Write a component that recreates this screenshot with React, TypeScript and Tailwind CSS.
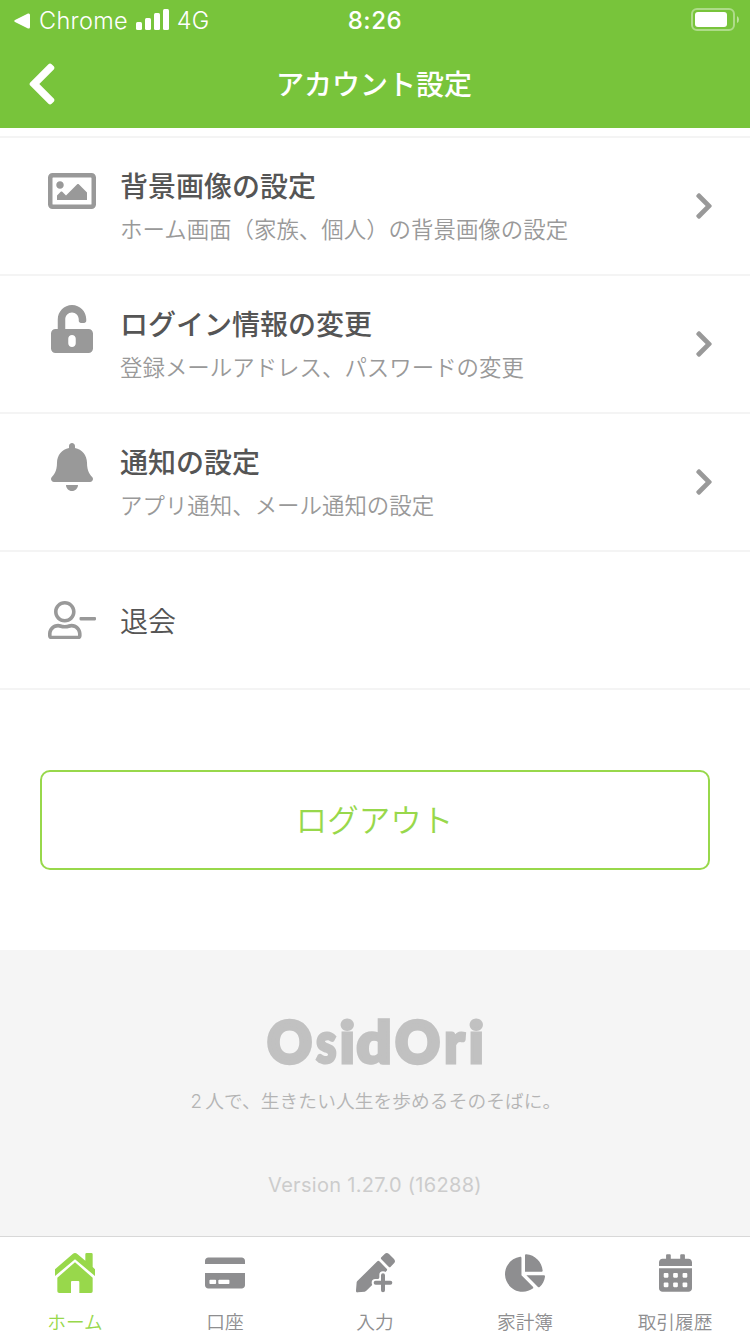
import { ReactNode } from 'react';
import {
  FaBell,
  FaCalendarAlt,
  FaChartPie,
  FaChevronLeft,
  FaChevronRight,
  FaCreditCard,
  FaRegImage,
  FaUnlockAlt,
} from 'react-icons/fa';

const UserMinusIcon = () => (
  <svg viewBox="0 0 640 512" className="w-12 h-[38.4px]" fill="currentColor">
    <path d="M313.6 304c-28.7 0-42.5 16-89.6 16s-60.8-16-89.6-16C60.2 304 0 364.2 0 438.4V464c0 26.5 21.5 48 48 48h352c26.5 0 48-21.5 48-48v-25.6c0-74.2-60.2-134.4-134.4-134.4zM400 464H48v-25.6c0-47.6 38.8-86.4 86.4-86.4 14.6 0 38.3 16 89.6 16 51.7 0 74.9-16 89.6-16 47.6 0 86.4 38.8 86.4 86.4V464zM224 288c79.5 0 144-64.5 144-144S303.5 0 224 0 80 64.5 80 144s64.5 144 144 144zm0-240c52.9 0 96 43.1 96 96s-43.1 96-96 96-96-43.1-96-96 43.1-96 96-96z" />
    <rect x="420" y="213" width="220" height="46" rx="14" />
  </svg>
);

const HomeIcon = () => (
  <svg viewBox="0 0 120 120" className="w-10 h-10" fill="currentColor">
    <path d="M0 49L53 3Q60-3 67 3L91 23V4Q91 0 95 0H109Q113 0 113 4V42L120 49V69L60 19L0 69Z" />
    <path d="M60 28L113 74V115Q113 120 108 120H73V87Q73 84 70 84H51Q48 84 48 87V120H13Q7 120 7 115V74Z" />
  </svg>
);

const PencilPlusIcon = () => (
  <svg viewBox="0 0 120 120" className="w-10 h-10" fill="currentColor">
    <path d="M79 13L89 3Q95-3 102 3L117 18Q123 25 117 31L107 41Q104 44 101 41L79 19Q76 16 79 13Z" />
    <path d="M67 25Q70 22 73 25L95 47Q98 50 95 53L34 113Q32 115 29 116L8 118Q2 119 3 112L5 88Q5 86 7 84Z" />
    <path d="M84 66V113M61 89H107" stroke="white" strokeWidth="22" strokeLinecap="round" />
    <path d="M84 67V112M62 89H106" stroke="currentColor" strokeWidth="12" strokeLinecap="round" />
  </svg>
);

const logoLetters = [
  { char: 'O', x: 12.5, scale: 0.94, stroke: 4.5 },
  { char: 's', x: 61, scale: 0.8, stroke: 3 },
  { char: 'i', x: 84.5, scale: 1.03, stroke: 3 },
  { char: 'd', x: 101.5, scale: 1.06, stroke: 3.5 },
  { char: 'O', x: 140.5, scale: 0.94, stroke: 4.5 },
  { char: 'r', x: 189, scale: 0.95, stroke: 3 },
  { char: 'i', x: 213.5, scale: 1.03, stroke: 3 },
];

const Logo = () => (
  <svg viewBox="0 0 240 84" className="w-60 h-[84px]" fill="#c1c1c1" stroke="#c1c1c1">
    {logoLetters.map((letter, index) => (
      <text
        key={index}
        transform={`translate(${letter.x} 63) scale(${letter.scale} 1)`}
        fontFamily="Lato"
        fontWeight="900"
        fontSize="58"
        strokeWidth={letter.stroke}
      >
        {letter.char}
      </text>
    ))}
  </svg>
);

const items = [
  {
    title: '背景画像の設定',
    description: 'ホーム画面（家族、個人）の背景画像の設定',
    icon: <FaRegImage className="size-12" />,
  },
  {
    title: 'ログイン情報の変更',
    description: '登録メールアドレス、パスワードの変更',
    icon: <FaUnlockAlt className="w-[42px] h-12" />,
  },
  {
    title: '通知の設定',
    description: 'アプリ通知、メール通知の設定',
    icon: <FaBell className="w-[42px] h-12" />,
  },
];

const tabs: { label: string; icon: ReactNode; active?: boolean }[] = [
  { label: 'ホーム', icon: <HomeIcon />, active: true },
  { label: '口座', icon: <FaCreditCard className="w-10 h-9" /> },
  { label: '入力', icon: <PencilPlusIcon /> },
  { label: '家計簿', icon: <FaChartPie className="w-10 h-[38px]" /> },
  { label: '取引履歴', icon: <FaCalendarAlt className="w-[33px] h-[38px]" /> },
];

const StatusBar = () => (
  <div className="grid grid-cols-3 items-center h-10 pl-[14px] pr-[11px] text-2xl leading-10">
    <div className="flex items-center">
      <svg viewBox="0 0 16 16" className="size-4 mr-[9px]" fill="currentColor">
        <path d="M1 7L14 .5Q16 0 16 2V14Q16 16 14 15.500L1 9Q-.5 8 1 7Z" />
      </svg>
      <span className="pt-px text-[23.500px] font-[350] tracking-[0.300px]">Chrome</span>
      <svg viewBox="0 0 33 21" className="w-[33px] h-[21px] ml-2 mr-2 mb-0.5" fill="currentColor">
        <rect x="0" y="13" width="6" height="8" rx="1.500" />
        <rect x="9" y="9" width="6" height="12" rx="1.500" />
        <rect x="18" y="4" width="6" height="17" rx="1.500" />
        <rect x="27" y="0" width="6" height="21" rx="1.500" />
      </svg>
      <span className="pt-px text-[23.500px] font-[350]">4G</span>
    </div>
    <div className="pt-px pr-[3px] text-center font-medium tracking-[0.600px]">8:26</div>
    <svg viewBox="0 0 48 23" className="w-12 h-[23px] mb-0.5 justify-self-end" fill="none">
      <rect x="1" y="1" width="42" height="21" rx="5" stroke="white" strokeOpacity=".4" strokeWidth="2" />
      <rect x="4" y="4" width="32" height="15" rx="3" fill="white" />
      <path d="M46 8Q48 9 48 11.500T46 15Z" fill="white" fillOpacity=".5" />
    </svg>
  </div>
);

const App = () => {
  return (
    <div className="flex flex-col w-[750px] h-[1334px] overflow-hidden bg-white font-['Inter','Noto_Sans_CJK_JP',sans-serif]">
      <header className="h-32 shrink-0 bg-[#78c43b] text-white">
        <StatusBar />
        <div className="grid grid-cols-[1fr_auto_1fr] items-center h-[88px] px-[27px]">
          <FaChevronLeft className="w-[30px] h-12" />
          <h1 className="pt-0.5 pr-0.5 text-[28px] leading-10 font-medium">アカウント設定</h1>
        </div>
      </header>

      <main className="shrink-0 pt-2 h-[822px]">
        <ul className="border-t-2 border-[#f4f4f4]">
          {items.map((item) => (
            <li key={item.title} className="flex h-[138px] border-b-2 border-[#f4f4f4] text-[#999999]">
              <div className="flex justify-center w-12 ml-12 mr-6 pt-[29px] shrink-0">{item.icon}</div>
              <div className="flex-1 pt-[29px]">
                <h2 className="text-[28px] leading-10 font-medium text-[#555555]">{item.title}</h2>
                <p className="mt-[3px] text-[22.450px] leading-10 font-[350] whitespace-nowrap">{item.description}</p>
              </div>
              <FaChevronRight className="w-5 h-[30px] mr-[36px] self-center" />
            </li>
          ))}
          <li className="flex items-center h-[138px] pl-12 gap-6 border-b-2 border-[#f4f4f4] text-[#999999]">
            <UserMinusIcon />
            <span className="pt-[3px] text-[28px] leading-10 font-[350] text-[#555555]">退会</span>
          </li>
        </ul>
        <div className="px-10 pt-20">
          <button className="w-full h-[100px] pt-0.5 pr-px rounded-[10px] border-2 border-[#98d84b] text-[#98d84b] text-[31.500px] font-[350]">
            ログアウト
          </button>
        </div>
      </main>

      <footer className="flex flex-col items-center h-[286px] shrink-0 pt-[50px] bg-[#f5f5f5]">
        <Logo />
        <p className="mt-0.5 pl-0.5 text-[18.700px] leading-8 font-[350] tracking-[0.100px] text-[#b4b4b4]">
          <span className="mr-[3px]">2</span>人で、生きたい人生を歩めるそのそばに。
        </p>
        <p className="mt-[51px] text-xl leading-8 tracking-[0.300px] text-[#cccccc]">Version 1.27.0 (16288)</p>
      </footer>

      <nav className="grid grid-cols-5 h-[98px] shrink-0 border-t border-[#d8d8d8]">
        {tabs.map((tab) => (
          <div
            key={tab.label}
            className={`flex flex-col items-center pt-4 ${tab.active ? 'text-[#98d84b]' : 'text-[#8e8e90]'}`}
          >
            <div className="flex items-center justify-center h-10">{tab.icon}</div>
            <span className="mt-4 text-[18.700px] leading-7 font-[350]">{tab.label}</span>
          </div>
        ))}
      </nav>
    </div>
  );
};

export default App;
